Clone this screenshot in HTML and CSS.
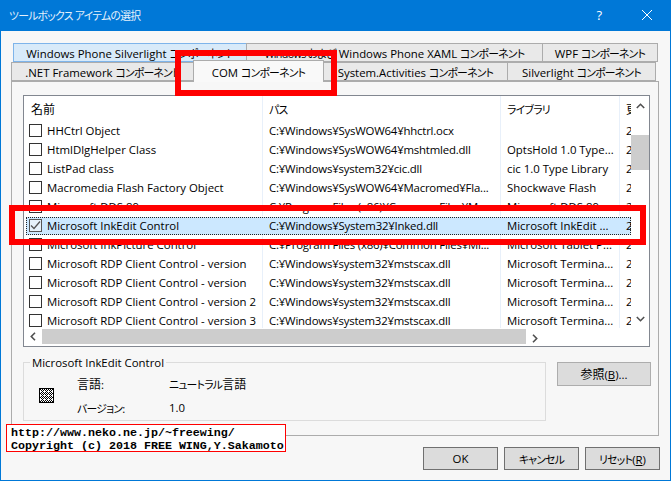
FILE: index.html
```html
<!DOCTYPE html>
<html lang="ja">
<head>
<meta charset="utf-8">
<title>ツールボックス アイテムの選択</title>
<link rel="stylesheet" href="styles.css">
</head>
<body>
<div class="window">
  <header class="titlebar">
    <span class="title"><span class="k">ツールボックス アイテムの選択</span></span>
    <span class="help">?</span>
    <svg class="close" width="10" height="10" viewBox="0 0 10 10"><path d="M0 0L10 10M10 0L0 10" stroke="#fff" stroke-width="1" fill="none"/></svg>
  </header>
  <main class="content">
    <div class="tabs">
      <div class="tabrow tabrow-back">
        <div class="tab tab-hover w-233"><span>Windows Phone Silverlight <span class="k">コンポーネント</span></span></div>
        <div class="tab w-296"><span><span class="k">Windows および</span> Windows Phone XAML <span class="k">コンポーネント</span></span></div>
        <div class="tab w-116"><span>WPF <span class="k">コンポーネント</span></span></div>
      </div>
      <div class="tabrow tabrow-front">
        <div class="tab w-182"><span>.NET Framework <span class="k">コンポーネント</span></span></div>
        <div class="tab tab-active w-130"><span>COM <span class="k">コンポーネント</span></span></div>
        <div class="tab w-184"><span>System.Activities <span class="k">コンポーネント</span></span></div>
        <div class="tab w-149"><span>Silverlight <span class="k">コンポーネント</span></span></div>
      </div>
    </div>
    <section class="panel">
      <div class="list">
        <div class="list-top">
          <div class="table">
            <div class="row head"><div class="cell c1"><span class="j">名前</span></div><div class="cell c2"><span class="k">パス</span></div><div class="cell c3"><span class="k">ライブラリ</span></div><div class="cell c4"><span class="j">更新日</span></div></div>
            <div class="row"><div class="cell c1"><span class="check"></span>HHCtrl Object</div><div class="cell c2">C:¥Windows¥SysWOW64¥hhctrl.ocx</div><div class="cell c3"></div><div class="cell c4">2</div></div>
            <div class="row"><div class="cell c1"><span class="check"></span>HtmlDlgHelper Class</div><div class="cell c2">C:¥Windows¥SysWOW64¥mshtmled.dll</div><div class="cell c3">OptsHold 1.0 Type...</div><div class="cell c4">2</div></div>
            <div class="row"><div class="cell c1"><span class="check"></span>ListPad class</div><div class="cell c2">C:¥Windows¥system32¥cic.dll</div><div class="cell c3">cic 1.0 Type Library</div><div class="cell c4">2</div></div>
            <div class="row"><div class="cell c1"><span class="check"></span>Macromedia Flash Factory Object</div><div class="cell c2">C:¥Windows¥SysWOW64¥Macromed¥Fla...</div><div class="cell c3">Shockwave Flash</div><div class="cell c4">2</div></div>
            <div class="row"><div class="cell c1"><span class="check"></span>Microsoft DDS 89</div><div class="cell c2">C:¥Program Files (x86)¥Common Files¥M...</div><div class="cell c3">Microsoft DDS 89</div><div class="cell c4">2</div></div>
            <div class="row selected"><div class="cell c1"><span class="check checked"><svg width="11" height="11" viewBox="0 0 11 11"><path d="M1 5.5L4 8.5L10 1.5" stroke="#555" stroke-width="1.3" fill="none"/></svg></span>Microsoft InkEdit Control</div><div class="cell c2">C:¥Windows¥System32¥Inked.dll</div><div class="cell c3">Microsoft InkEdit ...</div><div class="cell c4">2</div></div>
            <div class="row"><div class="cell c1"><span class="check"></span>Microsoft InkPicture Control</div><div class="cell c2">C:¥Program Files (x86)¥Common Files¥Mi...</div><div class="cell c3">Microsoft Tablet P...</div><div class="cell c4">2</div></div>
            <div class="row"><div class="cell c1"><span class="check"></span>Microsoft RDP Client Control - version</div><div class="cell c2">C:¥Windows¥system32¥mstscax.dll</div><div class="cell c3">Microsoft Termina...</div><div class="cell c4">2</div></div>
            <div class="row"><div class="cell c1"><span class="check"></span>Microsoft RDP Client Control - version</div><div class="cell c2">C:¥Windows¥system32¥mstscax.dll</div><div class="cell c3">Microsoft Termina...</div><div class="cell c4">2</div></div>
            <div class="row"><div class="cell c1"><span class="check"></span>Microsoft RDP Client Control - version 2</div><div class="cell c2">C:¥Windows¥system32¥mstscax.dll</div><div class="cell c3">Microsoft Termina...</div><div class="cell c4">2</div></div>
            <div class="row"><div class="cell c1"><span class="check"></span>Microsoft RDP Client Control - version 3</div><div class="cell c2">C:¥Windows¥system32¥mstscax.dll</div><div class="cell c3">Microsoft Termina...</div><div class="cell c4">2</div></div>
          </div>
          <div class="vscroll">
            <div class="sbtn sbtn-v"><svg width="9" height="6" viewBox="0 0 9 6"><path d="M0.8 5L4.5 1.3L8.2 5" stroke="#505050" stroke-width="1.6" fill="none"/></svg></div>
            <div class="vthumb"></div>
            <div class="sbtn sbtn-v sbtn-end"><svg width="9" height="6" viewBox="0 0 9 6"><path d="M0.8 1L4.5 4.7L8.2 1" stroke="#505050" stroke-width="1.6" fill="none"/></svg></div>
          </div>
        </div>
        <div class="hscroll">
          <div class="sbtn sbtn-h"><svg width="6" height="9" viewBox="0 0 6 9"><path d="M5 0.8L1.3 4.5L5 8.2" stroke="#505050" stroke-width="1.6" fill="none"/></svg></div>
          <div class="hthumb"></div>
          <div class="sbtn sbtn-h sbtn-end"><svg width="6" height="9" viewBox="0 0 6 9"><path d="M1 0.8L4.7 4.5L1 8.2" stroke="#505050" stroke-width="1.6" fill="none"/></svg></div>
        </div>
      </div>
      <div class="details">
        <div class="group">
          <span class="legend">Microsoft InkEdit Control</span>
          <svg class="item-icon" width="15" height="15" viewBox="0 0 15 15" shape-rendering="crispEdges">
            <defs><pattern id="dots" width="4" height="4" patternUnits="userSpaceOnUse"><rect width="4" height="4" fill="#fff"/><rect width="1" height="1" fill="#000"/><rect x="2" width="1" height="1" fill="#000"/><rect x="1" y="1" width="1" height="1" fill="#000"/><rect x="3" y="1" width="1" height="1" fill="#000"/><rect y="2" width="1" height="1" fill="#000"/><rect x="2" y="2" width="1" height="1" fill="#000"/><rect x="3" y="3" width="1" height="1" fill="#000"/></pattern></defs>
            <rect width="15" height="15" fill="url(#dots)"/>
            <rect x="0.5" y="0.5" width="14" height="14" fill="none" stroke="#000"/>
          </svg>
          <dl class="info">
            <dt><span class="j">言語</span>:</dt><dd><span class="k">ニュートラル</span><span class="j">言語</span></dd>
            <dt><span class="k">バージョン</span>:</dt><dd>1.0</dd>
          </dl>
        </div>
        <button class="btn btn-browse" type="button"><span class="j">参照</span>(<u>B</u>)...</button>
      </div>
    </section>
    <footer class="actions">
      <button class="btn btn-main" type="button">OK</button>
      <button class="btn btn-main" type="button"><span class="k">キャンセル</span></button>
      <button class="btn btn-main" type="button"><span class="k">リセット</span>(<u>R</u>)</button>
    </footer>
  </main>
  <div class="mark mark-tab"></div>
  <div class="mark mark-row"></div>
  <div class="credit">http://www.neko.ne.jp/~freewing/<br>Copyright (c) 2018 FREE WING,Y.Sakamoto</div>
</div>
</body>
</html>
```
FILE: styles.css
```css
* { box-sizing: border-box; }
html, body { margin: 0; padding: 0; }
body {
  width: 671px;
  height: 481px;
  overflow: hidden;
  font-family: "Open Sans", "Noto Sans CJK JP", sans-serif;
  font-size: 11.4px;
  font-feature-settings: "palt";
  color: #000;
  background: #f7f7f7;
}
.k { font-size: 10.8px; letter-spacing: -0.7px; }
.j { font-size: 12px; }
.window {
  position: relative;
  width: 671px;
  height: 481px;
  background: #f7f7f7;
  border: 1px solid #0078d7;
  border-top: 0;
  display: flex;
  flex-direction: column;
}
.titlebar {
  height: 31px;
  margin: 0 -1px;
  background: #0078d7;
  color: #fff;
  display: flex;
  align-items: center;
  padding: 0 19px 1px 9px;
  flex: none;
}
.title { flex: 1; color: #e6f1fb; }
.help { margin-right: 40px; font-size: 13px; }
.close { display: block; }
.content { flex: 1; padding: 12px 10px 0; display: flex; flex-direction: column; }
.tabs { position: relative; height: 38px; flex: none; }
.tabrow { display: flex; height: 19px; }
.tabrow-back { margin-left: 2px; }
.tab {
  height: 19px;
  background: #e9e9e9;
  border: 1px solid #acacac;
  margin-right: -1px;
  display: flex;
  align-items: center;
  justify-content: center;
  white-space: nowrap;
  overflow: hidden;
  flex: none;
}
.tabrow-front { position: relative; z-index: 1; }
.tab-hover { background: #d8eaf9; border-color: #7eb4ea; }
.tab-active {
  height: 22px;
  margin-top: -2px;
  background: #f9f9f9;
  border-bottom: 0;
  position: relative;
  z-index: 2;
}
.w-233 { width: 234px; }
.w-296 { width: 297px; }
.w-116 { width: 116px; }
.w-182 { width: 183px; }
.w-130 { width: 131px; }
.w-184 { width: 185px; }
.w-149 { width: 149px; }
.panel {
  width: 648px;
  height: 355px;
  background: #f7f7f7;
  border: 1px solid #acacac;
  padding: 13px 0 0 11px;
  flex: none;
}
.list {
  width: 627px;
  height: 252px;
  background: #fff;
  border: 1px solid #828790;
  display: flex;
  flex-direction: column;
}
.list-top { display: flex; height: 232px; flex: none; }
.table { width: 607px; overflow: hidden; flex: none; }
.row { display: flex; height: 19px; align-items: stretch; position: relative; }
.row.head { height: 25px; }
.cell {
  display: flex;
  align-items: center;
  white-space: nowrap;
  overflow: hidden;
  flex: none;
  border-right: 1px solid #e8f0fa;
  padding-left: 6px;
}
.c1 { width: 239px; padding-left: 5px; }
.c2 { width: 238px; letter-spacing: -0.2px; }
.c3 { width: 119px; }
.c4 { width: 11px; border-right: 0; }
.head .c1 { padding-left: 7px; }
.check {
  width: 13px;
  height: 13px;
  border: 1px solid #333;
  background: #fff;
  margin-right: 5px;
  flex: none;
  display: flex;
  align-items: center;
  justify-content: center;
}
.check.checked { border-color: #555; background: #e6f2fb; }
.row.selected::before {
  content: "";
  position: absolute;
  left: 2px;
  right: 0;
  top: 1px;
  bottom: 0;
  background: #cce8ff;
  border: 1px dotted #222;
}
.row.selected .cell { position: relative; border-right-color: transparent; background: transparent; }
.vscroll { flex: 1; display: flex; flex-direction: column; background: #fff; }
.sbtn { display: flex; align-items: center; justify-content: center; flex: none; }
.sbtn-v { height: 19px; }
.sbtn-end { margin-top: auto; }
.vthumb { height: 35px; margin-top: 20px; background: #cdcdcd; flex: none; }
.hscroll { display: flex; height: 18px; flex: none; background: #fff; padding-right: 17px; }
.sbtn-h { width: 18px; height: 16px; }
.hthumb { width: 484px; height: 15px; margin-top: 1px; background: #cdcdcd; flex: none; }
.details { display: flex; align-items: flex-start; margin-top: 15px; }
.group {
  position: relative;
  width: 523px;
  height: 59px;
  border: 1px solid #dcdcdc;
  display: flex;
  align-items: center;
  padding-left: 15px;
  flex: none;
}
.legend {
  position: absolute;
  left: 6px;
  top: -8px;
  padding: 0 2px;
  background: #f7f7f7;
  line-height: 16px;
}
.item-icon { flex: none; display: block; margin: 8px 23px 0 0; }
.info {
  margin: 8px 0 0;
  display: grid;
  grid-template-columns: 92px auto;
  grid-auto-rows: 24px;
  align-items: center;
}
.info dd { margin: 0; }
.btn {
  font: inherit;
  font-feature-settings: inherit;
  color: #000;
  background: #dcdcdc;
  padding: 0;
  border-radius: 0;
}
.btn-browse {
  width: 94px;
  height: 24px;
  margin-left: 11px;
  border: 1px solid #adadad;
  flex: none;
}
.actions { display: flex; gap: 6px; justify-content: flex-end; margin: 11px 0 0; }
.btn-main { width: 75px; height: 23px; border: 1px solid #707070; }
.mark { position: absolute; border: 6px solid #f00; pointer-events: none; z-index: 5; }
.mark-tab { left: 174px; top: 50px; width: 162px; height: 46px; }
.mark-row { left: 8px; top: 205px; width: 637px; height: 40px; }
.credit {
  position: absolute;
  z-index: 6;
  left: 5px;
  top: 424px;
  width: 280px;
  height: 28px;
  background: #fff;
  border: 1px solid #f00;
  padding: 2px 0 0 4px;
  font-family: "Liberation Mono", monospace;
  font-weight: 700;
  font-size: 11.67px;
  line-height: 13px;
  white-space: nowrap;
}
```
